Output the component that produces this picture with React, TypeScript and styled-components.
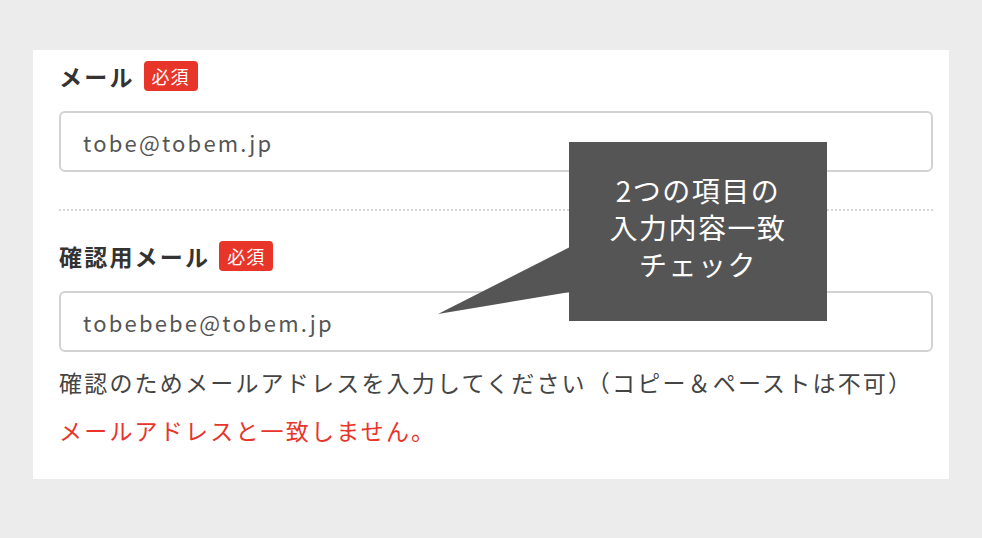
import styled, { createGlobalStyle } from "styled-components";

const GlobalStyle = createGlobalStyle`
    body {
        margin: 0;
        background: #ececec;
        font-family: "Noto Sans CJK JP", "Noto Sans", sans-serif;
    }
`;

const Page = styled.div`
    width: 982px;
    height: 538px;
    padding: 50px 0 0 33px;
    box-sizing: border-box;
`;

const Card = styled.div`
    position: relative;
    width: 916px;
    height: 429px;
    background: #fff;
    padding: 11px 16px 0 26px;
    box-sizing: border-box;
`;

const LabelRow = styled.div`
    display: flex;
    align-items: center;
    gap: 9px;
    height: 30px;
    margin-bottom: 20px;
`;

const Label = styled.span`
    font-size: 23px;
    font-weight: 700;
    letter-spacing: 2.2px;
    color: #333;
`;

const Required = styled.span`
    display: inline-flex;
    align-items: center;
    justify-content: center;
    width: 54px;
    height: 30px;
    border-radius: 4px;
    background: #e8352a;
    color: #fff;
    font-size: 18px;
    letter-spacing: 1px;
`;

const Input = styled.div`
    height: 61px;
    box-sizing: border-box;
    border: 2px solid #d2d2d2;
    border-radius: 6px;
    padding: 0 22px;
    display: flex;
    align-items: center;
    font-size: 22px;
    letter-spacing: 2.2px;
    color: #555;
`;

const Divider = styled.hr`
    margin: 37px 0 30px;
    border: 0;
    border-top: 2px dotted #d8d8d8;
    height: 0;
`;

const Note = styled.p<{ $error?: boolean }>`
    margin: ${(p) => (p.$error ? "18px" : "15px")} 0 0;
    line-height: 30px;
    font-size: 23px;
    letter-spacing: 2.2px;
    color: ${(p) => (p.$error ? "#e8352a" : "#444")};
    white-space: nowrap;
`;

const Callout = styled.div`
    position: absolute;
    left: 536px;
    top: 92px;
    width: 258px;
    height: 179px;
    padding-bottom: 8px;
    box-sizing: border-box;
    background: #555;
    color: #fff;
    display: flex;
    flex-direction: column;
    align-items: center;
    justify-content: center;
    font-size: 28px;
    line-height: 37px;
    letter-spacing: 1.5px;
    text-align: center;
`;

const Tail = styled.svg`
    position: absolute;
    left: -131px;
    top: 105px;
`;

function Field({ label, value }: { label: string; value: string }) {
    return (
        <>
            <LabelRow>
                <Label>{label}</Label>
                <Required>必須</Required>
            </LabelRow>
            <Input>{value}</Input>
        </>
    );
}

export default function App() {
    return (
        <Page>
            <GlobalStyle />
            <Card>
                <Field label="メール" value="tobe@tobem.jp" />
                <Divider />
                <Field label="確認用メール" value="tobebebe@tobem.jp" />
                <Note>確認のためメールアドレスを入力してください（コピー＆ペーストは不可）</Note>
                <Note $error>メールアドレスと一致しません。</Note>
                <Callout>
                    <Tail width="132" height="67" viewBox="0 0 132 67">
                        <polygon points="132,0 132,45 0,67" fill="#555" />
                    </Tail>
                    <span>2つの項目の</span>
                    <span>入力内容一致</span>
                    <span>チェック</span>
                </Callout>
            </Card>
        </Page>
    );
}
